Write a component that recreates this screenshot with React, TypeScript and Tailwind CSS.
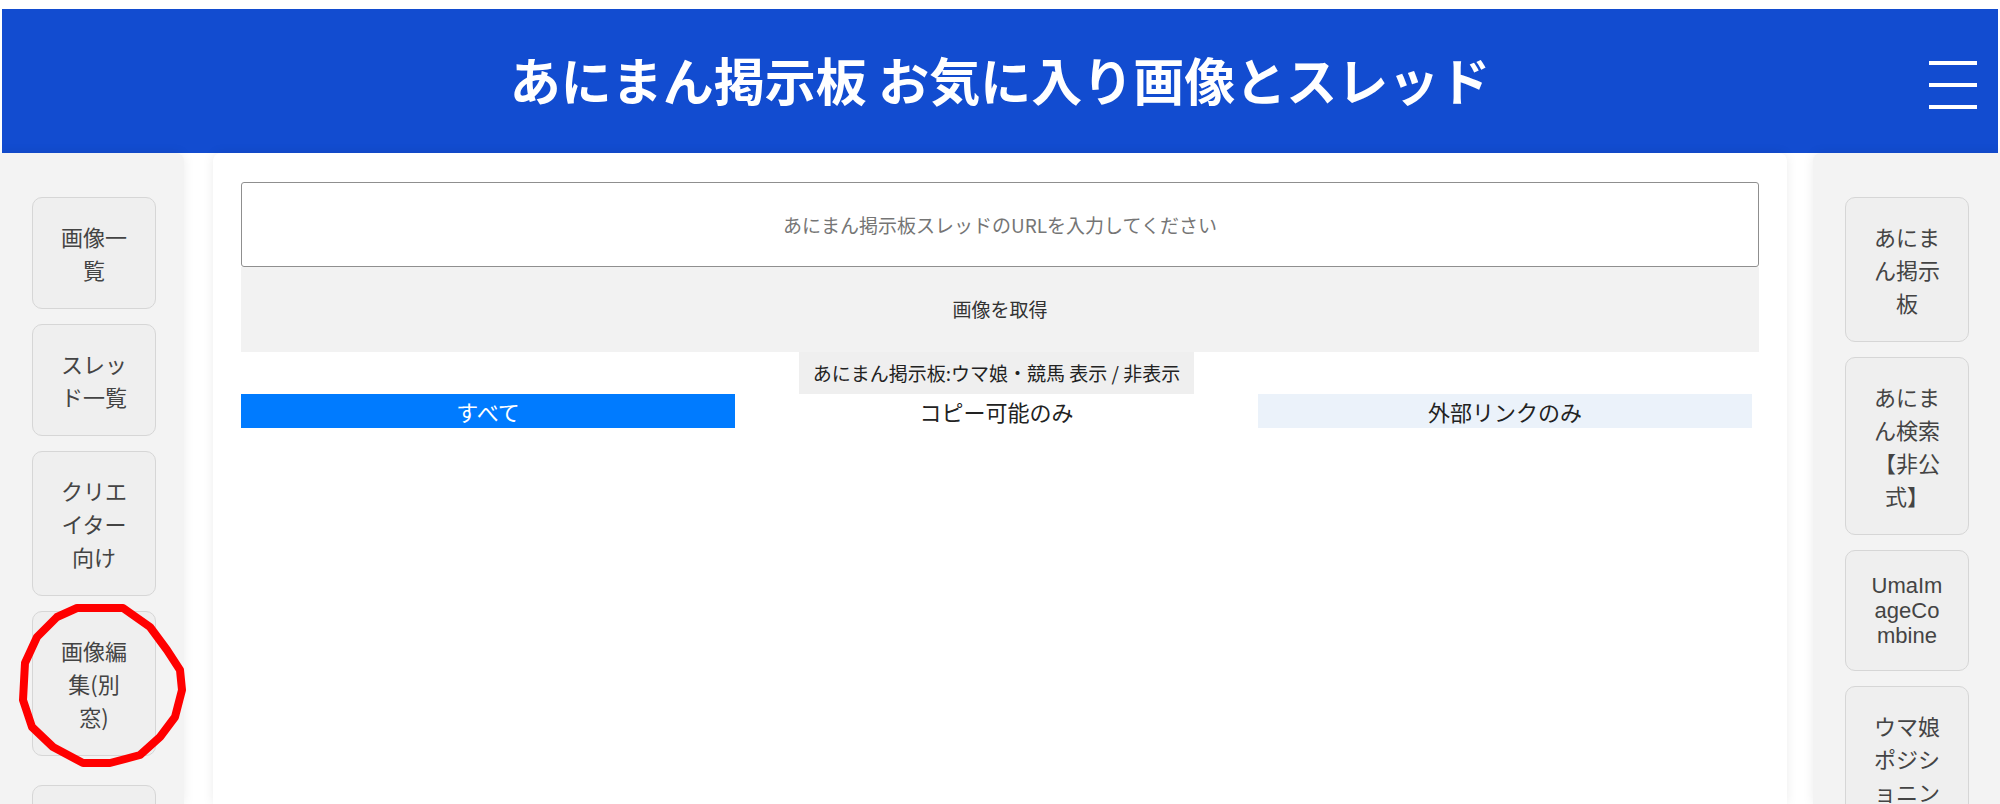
import React from 'react';

const leftLinks = [
  { lines: ['画像一', '覧'] },
  { lines: ['スレッ', 'ド一覧'] },
  { lines: ['クリエ', 'イター', '向け'] },
  { lines: ['画像編', '集(別', '窓)'] },
];

const rightLinks = [
  { lines: ['あにま', 'ん掲示', '板'] },
  { lines: ['あにま', 'ん検索', '【非公', '式】'] },
  { lines: ['UmaIm', 'ageCo', 'mbine'], latin: true },
  { lines: ['ウマ娘', 'ポジシ', 'ョニン', 'グマッ', 'プ'] },
];

function SideButton({ lines, latin }: { lines: string[]; latin?: boolean }) {
  return (
    <a
      href="#"
      className={
        latin
          ? "block w-[124px] rounded-[10px] border border-[#d6d6d6] bg-[#efefef] px-[25px] py-[22px] text-center font-['Liberation_Sans',sans-serif] text-[22px] leading-[25px] text-[#444]"
          : 'block w-[124px] rounded-[10px] border border-[#d6d6d6] bg-[#efefef] px-[25px] py-[22px] text-center text-[22px] leading-[33px] text-[#444]'
      }
    >
      {lines.map((l, i) => (
        <React.Fragment key={i}>
          {i > 0 && <br />}
          {l}
        </React.Fragment>
      ))}
    </a>
  );
}

export default function App() {
  return (
    <div className="h-screen overflow-hidden bg-white font-['Noto_Sans_CJK_JP',sans-serif]">
      {/* Header */}
      <header className="mx-[2px] mt-[9px] grid h-[144px] grid-cols-[1fr_auto_1fr] items-center bg-[#124cd0]">
        <div />
        <h1 className="-mt-[4px] text-[51px] font-bold leading-none text-white">あにまん掲示板 お気に入り画像とスレッド</h1>
        <div className="flex justify-end pr-[21px]">
          <button className="mt-[8px] flex w-[48px] flex-col gap-[18px]" aria-label="menu">
            <span className="h-[4px] bg-white" />
            <span className="h-[4px] bg-white" />
            <span className="h-[4px] bg-white" />
          </button>
        </div>
      </header>

      <div className="flex">
        {/* Left sidebar */}
        <aside className="relative flex h-[651px] w-[184px] shrink-0 flex-col gap-[15px] rounded-tr-lg bg-[#f3f3f3] pl-[32px] pt-[44px] shadow-[0_0_12px_rgba(0,0,0,0.08)]">
          {leftLinks.map((l, i) => (
            <SideButton key={i} lines={l.lines} />
          ))}
          <div className="mt-[14px]">
            <SideButton lines={['お問い', '合わせ']} />
          </div>
          {/* red annotation */}
          <svg className="absolute left-[15px] top-[447px]" width="175" height="175" viewBox="0 0 175 175">
            <polygon
              points="62,8 108,8 135,27 152,50 165,70 167,90 160,117 145,137 125,155 95,163 68,163 38,147 17,127 8,100 10,63 22,37 42,17"
              fill="none"
              stroke="#ff0000"
              strokeWidth="8"
              strokeLinejoin="round"
            />
          </svg>
        </aside>

        {/* Main */}
        <main className="ml-[29px] h-[651px] w-[1574px] shrink-0 rounded-t-lg bg-white px-[28px] pt-[29px] shadow-[0_0_12px_rgba(0,0,0,0.08)]">
          <input
            type="text"
            placeholder="あにまん掲示板スレッドのURLを入力してください"
            className="block h-[85px] w-full rounded-[3px] border border-[#8f8f8f] text-center text-[19px] text-[#333] placeholder:text-[#757575]"
          />
          <button className="block h-[85px] w-full bg-[#f2f2f2] text-[19px] text-[#333]">画像を取得</button>
          <div className="flex justify-center pr-[7px]">
            <button className="h-[42px] bg-[#efefef] px-[14px] text-[19px] text-[#222]">
              あにまん掲示板:ウマ娘・競馬 表示 / 非表示
            </button>
          </div>
          <div className="flex h-[34px] text-[22px] leading-[34px]">
            <button className="w-[494px] bg-[#007bff] text-white">すべて</button>
            <button className="w-[523px] text-[#222]">コピー可能のみ</button>
            <button className="w-[494px] bg-[#ebf2fa] text-[#222]">外部リンクのみ</button>
          </div>
        </main>

        {/* Right sidebar */}
        <aside className="ml-[26px] flex h-[651px] w-[187px] shrink-0 flex-col gap-[15px] rounded-tl-lg bg-[#f3f3f3] pl-[32px] pt-[44px] shadow-[0_0_12px_rgba(0,0,0,0.08)]">
          {rightLinks.map((l, i) => (
            <SideButton key={i} lines={l.lines} latin={l.latin} />
          ))}
        </aside>
      </div>
    </div>
  );
}
